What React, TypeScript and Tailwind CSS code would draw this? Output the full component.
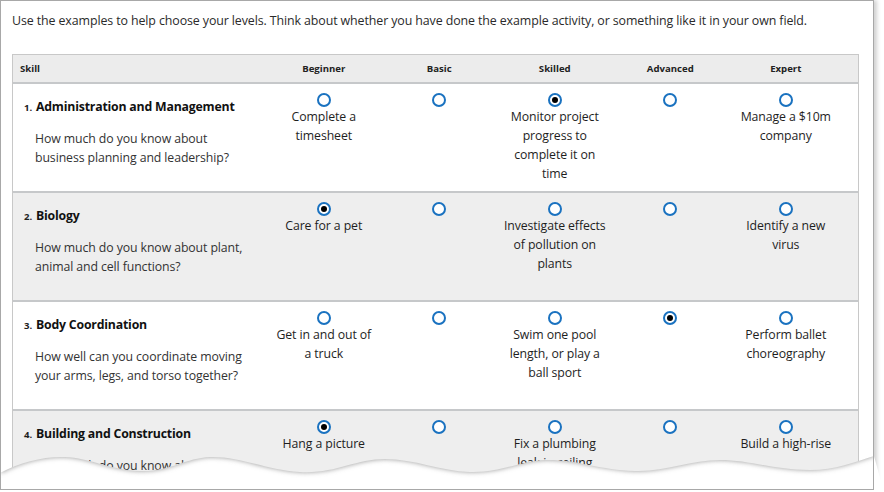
import React from 'react';

type Row = {
  num: string;
  title: string;
  desc: string[];
  picked: number;
  examples: (string[] | null)[];
  shaded: boolean;
};

const levels = ['Beginner', 'Basic', 'Skilled', 'Advanced', 'Expert'];

const rows: Row[] = [
  {
    num: '1.',
    title: 'Administration and Management',
    desc: ['How much do you know about', 'business planning and leadership?'],
    picked: 2,
    examples: [['Complete a', 'timesheet'], null, ['Monitor project', 'progress to', 'complete it on', 'time'], null, ['Manage a $10m', 'company']],
    shaded: false,
  },
  {
    num: '2.',
    title: 'Biology',
    desc: ['How much do you know about plant,', 'animal and cell functions?'],
    picked: 0,
    examples: [['Care for a pet'], null, ['Investigate effects', 'of pollution on', 'plants'], null, ['Identify a new', 'virus']],
    shaded: true,
  },
  {
    num: '3.',
    title: 'Body Coordination',
    desc: ['How well can you coordinate moving', 'your arms, legs, and torso together?'],
    picked: 3,
    examples: [['Get in and out of', 'a truck'], null, ['Swim one pool', 'length, or play a', 'ball sport'], null, ['Perform ballet', 'choreography']],
    shaded: false,
  },
  {
    num: '4.',
    title: 'Building and Construction',
    desc: ['How much do you know about', 'building and repairs?'],
    picked: 0,
    examples: [['Hang a picture'], null, ['Fix a plumbing', 'leak in ceiling'], null, ['Build a high-rise']],
    shaded: true,
  },
];

function Radio({ on }: { on: boolean }) {
  return (
    <span className="flex h-[14px] w-[14px] items-center justify-center rounded-full border-2 border-[#1a72c0] bg-white">
      {on && <span className="h-[6px] w-[6px] rounded-full bg-black" />}
    </span>
  );
}

function TornEdge() {
  const wave =
    'M0 473 C 20 462, 45 456, 65 457 C 90 458, 110 470, 140 471 C 170 472, 185 458, 210 457 C 240 456, 265 470, 300 472 C 335 474, 355 459, 385 459 C 415 459, 440 471, 470 472 C 500 473, 520 461, 545 460 C 575 459, 600 470, 635 471 C 665 472, 690 460, 720 460 C 750 460, 775 470, 810 470 C 835 470, 855 462, 874 456';
  return (
    <svg className="pointer-events-none absolute left-0 top-0" width="884" height="492" viewBox="0 0 884 492">
      <defs>
        <filter id="blur" x="-5%" y="-50%" width="110%" height="200%">
          <feGaussianBlur stdDeviation="2.5" />
        </filter>
        <clipPath id="below">
          <path d={`${wave} L 884 492 L 0 492 Z`} />
        </clipPath>
      </defs>
      <path d={`${wave} L 874 492 L 0 492 Z`} fill="#ffffff" />
      <g clipPath="url(#below)">
        <path d={wave} transform="translate(0 -3)" fill="none" stroke="#9a9a9a" strokeWidth="6" filter="url(#blur)" />
        <path d="M874 456 L 884 452 L 884 492 L 874 492 Z" fill="#ffffff" />
      </g>
      <line x1="0.5" y1="0" x2="0.5" y2="489" stroke="#a8a8a8" />
      <line x1="0" y1="489.5" x2="874" y2="489.5" stroke="#a8a8a8" />
      <line x1="873.5" y1="0" x2="873.5" y2="489" stroke="#a8a8a8" />
    </svg>
  );
}

export default function App() {
  return (
    <div className="relative h-[492px] w-[884px] overflow-hidden bg-white text-[#1e1e1e]" style={{ fontFamily: '"Open Sans", "Noto Sans", sans-serif' }}>
      {/* window frame with right shadow */}
      <div className="h-[490px] w-[874px] border-t border-[#a8a8a8] bg-white shadow-[3px_0_4px_rgba(0,0,0,0.18)]">
        <p className="pl-[12px] pt-[10px] text-[12.4px] leading-[19px] tracking-[-0.1px] text-[#2a2a2a]">
          Use the examples to help choose your levels. Think about whether you have done the example activity, or something like it in your own field.
        </p>

        <div className="ml-[12px] mt-[24px] w-[847px] border-x border-t border-[#c8c8c8]">
          {/* header */}
          <div className="flex h-[29px] items-center border-b-2 border-[#c6c8ca] bg-[#ececec] pt-[1px] text-[9.6px] font-bold text-[#222]">
            <div className="w-[253px] pl-[7px]">Skill</div>
            {levels.map((l) => (
              <div key={l} className="w-[115.5px] text-center">
                {l}
              </div>
            ))}
          </div>

          {rows.map((r) => (
            <div
              key={r.num}
              className={`flex h-[109px] border-b-2 border-[#c6c8ca] ${r.shaded ? 'bg-[#eeeeee]' : 'bg-white'}`}
            >
              <div className="w-[253px] pl-[11px] pt-[13px]">
                <div className="flex items-baseline leading-[19px]">
                  <span className="w-[12px] text-[9.6px] font-bold">{r.num}</span>
                  <span className="text-[12.3px] font-bold tracking-[-0.2px] text-[#111]">{r.title}</span>
                </div>
                <div className="mt-[12px] pl-[11px] text-[12.3px] leading-[19px] tracking-[-0.1px] text-[#333]">
                  {r.desc.map((d) => (
                    <div key={d}>{d}</div>
                  ))}
                </div>
              </div>
              {r.examples.map((ex, i) => (
                <div key={i} className="flex w-[115.5px] flex-col items-center pt-[9px]">
                  <Radio on={r.picked === i} />
                  {ex && (
                    <div className="text-center text-[12.3px] leading-[19px] tracking-[-0.1px] text-[#1e1e1e]">
                      {ex.map((t) => (
                        <div key={t}>{t}</div>
                      ))}
                    </div>
                  )}
                </div>
              ))}
            </div>
          ))}
        </div>
      </div>
      <TornEdge />
    </div>
  );
}
